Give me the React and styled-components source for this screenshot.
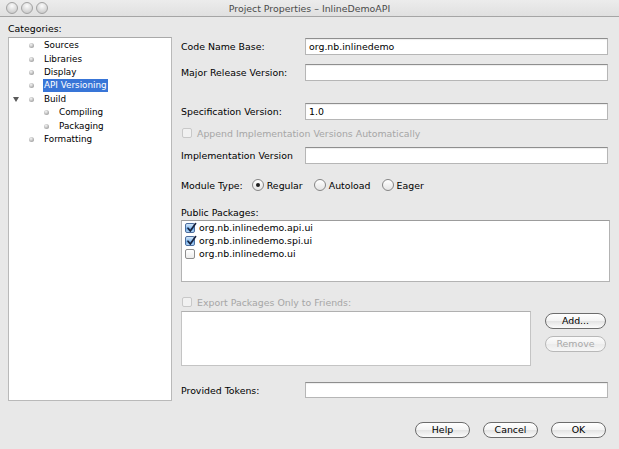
import React from "react"
import styled, { createGlobalStyle } from "styled-components"

const GlobalStyle = createGlobalStyle`
html, body {
  margin: 0;
  padding: 0;
  background: #e8e8e8;
}
body {
  font-family: "DejaVu Sans", "Liberation Sans", sans-serif;
}
`

const Window = styled.div`
width: 619px;
height: 449px;
display: flex;
flex-direction: column;
background: #e8e8e8;
color: #000;
font-size: 9.4px;
overflow: hidden;
`

const TitleBar = styled.div`
flex: none;
height: 16px;
display: grid;
grid-template-columns: 1fr auto 1fr;
align-items: center;
border-bottom: 1px solid #a5a5a5;
background: linear-gradient(#ececec, #e0e0e0);
`

const Lights = styled.div`
display: flex;
gap: 3px;
padding-left: 6px;
`

const Light = styled.span`
box-sizing: border-box;
width: 12px;
height: 12px;
border-radius: 50%;
border: 1px solid #a2a2a2;
background: radial-gradient(circle at 50% 30%, #fbfbfb, #d2d2d2 70%, #c4c4c4);
`

const Title = styled.div`
color: #4a4a4a;
white-space: nowrap;
`

const Body = styled.div`
flex: none;
height: 384px;
display: flex;
padding-left: 8px;
`

const Sidebar = styled.div`
width: 164px;
flex: none;
display: flex;
flex-direction: column;
`

const SideLabel = styled.div`
box-sizing: border-box;
height: 20px;
padding-top: 6px;
line-height: 12px;
`

const Tree = styled.div`
flex: 1;
background: #fff;
border: 1px solid #b9b9b9;
border-top-color: #a9a9a9;
padding-top: 1px;
`

const TreeRow = styled.div`
height: 13.4px;
display: flex;
align-items: center;
padding-left: ${p => 4 + p.depth * 15}px;
font-size: 8.8px;
`

const Twisty = styled.span`
width: 16px;
flex: none;
display: flex;
align-items: center;
`

const Triangle = styled.span`
width: 0;
height: 0;
border-left: 3px solid transparent;
border-right: 3px solid transparent;
border-top: 5px solid #5a5a5a;
`

const Bullet = styled.span`
width: 5px;
height: 5px;
flex: none;
border-radius: 50%;
margin-right: 9px;
background: radial-gradient(circle at 40% 35%, #f6f6f6, #a6a6a6 70%, #8c8c8c);
`

const TreeLabel = styled.span`
padding: 0 1px;
line-height: 13px;
background: ${p => (p.selected ? "#3875d7" : "transparent")};
color: ${p => (p.selected ? "#fff" : "#000")};
`

const Form = styled.div`
flex: 1;
display: flex;
flex-direction: column;
padding: 0 9px;
`

const FieldRow = styled.div`
display: grid;
grid-template-columns: 124px 303px;
align-items: center;
margin-top: ${p => p.mt}px;
`

const TextField = styled.div`
box-sizing: border-box;
height: ${p => p.h || 17}px;
padding: 0 3px;
display: flex;
align-items: center;
background: #fff;
border: 1px solid #b6b6b6;
border-top-color: #8e8e8e;
box-shadow: inset 0 1px 1px rgba(0, 0, 0, 0.07);
color: #000;
`

const LineRow = styled.div`
height: 14px;
display: flex;
align-items: center;
margin-top: ${p => p.mt}px;
color: ${p => (p.disabled ? "#a6a6a6" : "#000")};
`

const CheckBox = styled.span`
box-sizing: border-box;
position: relative;
width: 10px;
height: 10px;
flex: none;
border-radius: 2px;
margin: 0 ${p => p.gap || 4}px 0 ${p => p.indent || 0}px;
border: 1px solid ${p => (p.disabled ? "#c8c8c8" : p.checked ? "#4d6e9e" : "#8e8e8e")};
background: ${p =>
  p.disabled
    ? "#f1f1f1"
    : p.checked
    ? "linear-gradient(#d4e7fa, #8fc0ef 50%, #6aa8e8 51%, #b2d6f7)"
    : "linear-gradient(#ffffff, #ececec)"};
svg {
  position: absolute;
  left: 0;
  top: -2px;
}
`

const RadioGroup = styled.div`
display: flex;
align-items: center;
margin-left: 9px;
gap: 11px;
`

const RadioOption = styled.span`
display: flex;
align-items: center;
gap: 3px;
`

const Radio = styled.span`
box-sizing: border-box;
position: relative;
width: 12px;
height: 12px;
border-radius: 50%;
border: 1px solid #858585;
background: linear-gradient(#ffffff, #e4e4e4);
&::after {
  content: "";
  display: ${p => (p.checked ? "block" : "none")};
  position: absolute;
  left: 3px;
  top: 3px;
  width: 4px;
  height: 4px;
  border-radius: 50%;
  background: #1e1e1e;
}
`

const ListBox = styled.div`
box-sizing: border-box;
height: 62px;
margin-top: 1px;
background: #fff;
border: 1px solid #b3b3b3;
border-top-color: #9c9c9c;
padding-left: 2px;
`

const ListItem = styled.div`
height: 13px;
display: flex;
align-items: center;
color: #000;
`

const FriendsRow = styled.div`
display: flex;
margin-top: 2px;
`

const FriendsBox = styled.div`
box-sizing: border-box;
width: 350px;
height: 55px;
background: #fff;
border: 1px solid #c4c4c4;
border-top-color: #b0b0b0;
`

const SideButtons = styled.div`
display: flex;
flex-direction: column;
gap: 7px;
padding-top: 2px;
margin-left: 14px;
`

const PushButton = styled.button`
box-sizing: border-box;
width: ${p => p.w}px;
height: 16px;
padding: 0;
border-radius: 8px;
border: 1px solid ${p => (p.disabled ? "#b8b8b8" : "#6c6c6c")};
background: ${p =>
  p.disabled
    ? "linear-gradient(#fbfbfb, #f2f2f2 50%, #ebebeb 51%, #f6f6f6)"
    : "linear-gradient(#ffffff, #f3f3f3 50%, #e3e3e3 51%, #fbfbfb)"};
color: ${p => (p.disabled ? "#a8a8a8" : "#000")};
font: inherit;
line-height: 14px;
`

const Footer = styled.div`
flex: none;
display: flex;
justify-content: flex-end;
gap: 13px;
padding: 21px 13px 0 0;
`

const Check = () => (
  <svg width="12" height="12" viewBox="0 0 12 12">
    <path d="M2 6.2 L4.3 9 L9.6 1.6" fill="none" stroke="#17233f" strokeWidth="1.7" strokeLinecap="round" strokeLinejoin="round" />
  </svg>
)

const categories = [
  { name: "Sources", depth: 0 },
  { name: "Libraries", depth: 0 },
  { name: "Display", depth: 0 },
  { name: "API Versioning", depth: 0, selected: true },
  { name: "Build", depth: 0, open: true },
  { name: "Compiling", depth: 1 },
  { name: "Packaging", depth: 1 },
  { name: "Formatting", depth: 0 },
]

const packages = [
  { name: "org.nb.inlinedemo.api.ui", checked: true },
  { name: "org.nb.inlinedemo.spi.ui", checked: true },
  { name: "org.nb.inlinedemo.ui", checked: false },
]

const App = () => (
  <Window>
    <GlobalStyle />
    <TitleBar>
      <Lights><Light /><Light /><Light /></Lights>
      <Title>Project Properties – InlineDemoAPI</Title>
      <span />
    </TitleBar>
    <Body>
      <Sidebar>
        <SideLabel>Categories:</SideLabel>
        <Tree>
          {categories.map(c => (
            <TreeRow key={c.name} depth={c.depth}>
              <Twisty>{c.open && <Triangle />}</Twisty>
              <Bullet />
              <TreeLabel selected={c.selected}>{c.name}</TreeLabel>
            </TreeRow>
          ))}
        </Tree>
      </Sidebar>
      <Form>
        <FieldRow mt={21}>
          <span>Code Name Base:</span>
          <TextField>org.nb.inlinedemo</TextField>
        </FieldRow>
        <FieldRow mt={9}>
          <span>Major Release Version:</span>
          <TextField />
        </FieldRow>
        <FieldRow mt={22}>
          <span>Specification Version:</span>
          <TextField>1.0</TextField>
        </FieldRow>
        <LineRow mt={6} disabled>
          <CheckBox disabled indent={1} gap={5} />
          Append Implementation Versions Automatically
        </LineRow>
        <FieldRow mt={7}>
          <span>Implementation Version</span>
          <TextField />
        </FieldRow>
        <LineRow mt={14}>
          Module Type:
          <RadioGroup>
            <RadioOption><Radio checked />Regular</RadioOption>
            <RadioOption><Radio />Autoload</RadioOption>
            <RadioOption><Radio />Eager</RadioOption>
          </RadioGroup>
        </LineRow>
        <LineRow mt={13}>Public Packages:</LineRow>
        <ListBox>
          {packages.map(p => (
            <ListItem key={p.name}>
              <CheckBox checked={p.checked} indent={1} gap={4}>
                {p.checked && <Check />}
              </CheckBox>
              {p.name}
            </ListItem>
          ))}
        </ListBox>
        <LineRow mt={13} disabled>
          <CheckBox disabled indent={1} gap={5} />
          Export Packages Only to Friends:
        </LineRow>
        <FriendsRow>
          <FriendsBox />
          <SideButtons>
            <PushButton w={61}>Add...</PushButton>
            <PushButton w={61} disabled>Remove</PushButton>
          </SideButtons>
        </FriendsRow>
        <FieldRow mt={16}>
          <span>Provided Tokens:</span>
          <TextField h={16} />
        </FieldRow>
      </Form>
    </Body>
    <Footer>
      <PushButton w={55}>Help</PushButton>
      <PushButton w={55}>Cancel</PushButton>
      <PushButton w={55}>OK</PushButton>
    </Footer>
  </Window>
)

export default App
